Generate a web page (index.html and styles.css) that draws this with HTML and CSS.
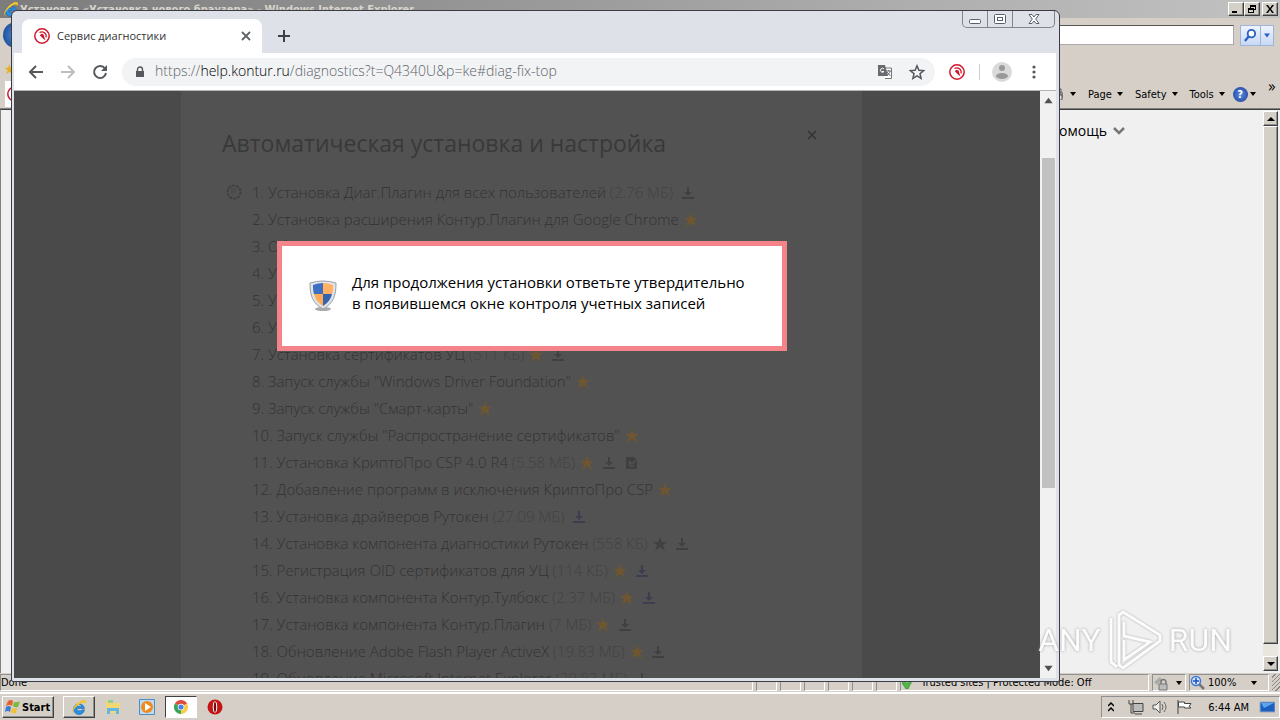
FILE: index.html
```html
<!DOCTYPE html>
<html lang="ru">
<head>
  <meta charset="UTF-8">
  <meta name="viewport" content="width=device-width, initial-scale=1.0">
  <title>Сервис диагностики</title>
  <link rel="stylesheet" href="styles.css">
</head>
<body>
  <svg class="sprite" aria-hidden="true">
    <symbol id="star" viewBox="0 0 14 14"><path d="M7 0l2 5h5l-4 3 2 6-5-4-5 4 2-6-4-3h5z" fill="currentColor"/></symbol>
    <symbol id="download" viewBox="0 0 14 14"><path d="M6 1h2v5h3l-4 4-4-4h3zM1 11h12v2H1z" fill="currentColor"/></symbol>
    <symbol id="reboot" viewBox="0 0 14 14"><path d="M2 1h8l3 3v9H2z" fill="currentColor"/><path d="M5 5l3 3 4-4M10 9.500a2.500 2.500 0 1 1-4-3" fill="none" stroke="#525252" stroke-width="1.300"/></symbol>
    <symbol id="caret" viewBox="0 0 8 8"><path d="M1 2h6L4 6z" fill="currentColor"/></symbol>
    <symbol id="kontur" viewBox="0 0 16 16"><circle cx="8" cy="8" r="7.200" fill="#fff" stroke="#d0162c" stroke-width="1.500"/><path d="M5.500 4.500A4.400 4.400 0 0 1 12 9.500" fill="none" stroke="#d0162c" stroke-width="1.200"/><path d="M6 7.500a2 2 0 0 1 4 .8L11.500 12.500 8.500 10z" fill="#d0162c"/></symbol>
    <symbol id="ie" viewBox="0 0 16 16"><path d="M13.500 9.500H5.500C6 12 10 12.500 11 10.800h2.500A5.500 5.500 0 1 1 13.500 9.500zM5.600 7.200h5C10 4.500 6.200 4.500 5.600 7.200z" fill="#2a8fe0" stroke="#1560b0" stroke-width=".5"/><path d="M2 14.500C-1 12 6 2 13 1c3 0 2 3 1 4 0-3-5-1-9 3-4 4-4 7-1 6z" fill="#f5c52c"/></symbol>
  </svg>

  <div class="desktop">
    <section class="ie">
      <div class="ie-title">
        <svg class="icon16"><use href="#ie"/></svg>
        <span class="ie-name">Установка «Установка нового браузера» - Windows Internet Explorer</span>
        <button class="classic cap" aria-label="Minimize"><svg viewBox="0 0 10 8"><path d="M1 6h5v2H1z"/></svg></button>
        <button class="classic cap" aria-label="Restore"><svg viewBox="0 0 10 8"><path d="M3 0h6v5H7v3H1V3h2zM4 2v1h3v1h1V2zM2 5v2h4V5z" fill-rule="evenodd"/></svg></button>
        <button class="classic cap close" aria-label="Close"><svg viewBox="0 0 10 8"><path d="M1 0h2l2 3 2-3h2L6 4l3 4H7L5 5 3 8H1l3-4z"/></svg></button>
      </div>
      <div class="ie-nav">
        <span class="ie-back"></span>
        <input class="ie-address" type="text" aria-label="Search">
        <button class="ie-search" aria-label="Go"><svg viewBox="0 0 14 14"><circle cx="8" cy="5" r="4" fill="#fff" stroke="#2b62c4" stroke-width="2"/><path d="M5 8l-4 5" stroke="#2b62c4" stroke-width="2.500"/></svg></button>
        <button class="ie-search drop" aria-label="Providers"><svg class="caret"><use href="#caret"/></svg></button>
      </div>
      <div class="ie-favs">★</div>
      <div class="ie-commands">
        <span class="ie-tab"><svg class="icon16"><use href="#kontur"/></svg></span>
        <button class="cmd"><svg class="printer" viewBox="0 0 12 12"><path d="M0 4h10v6H0z" fill="#888"/><path d="M2 1h6v3H2zM4 7h5v5H4z" fill="#ddd" stroke="#555"/></svg><svg class="caret"><use href="#caret"/></svg></button>
        <button class="cmd">Page<svg class="caret"><use href="#caret"/></svg></button>
        <button class="cmd">Safety<svg class="caret"><use href="#caret"/></svg></button>
        <button class="cmd">Tools<svg class="caret"><use href="#caret"/></svg></button>
        <button class="cmd help"><span class="help-ball">?</span><svg class="caret"><use href="#caret"/></svg></button>
        <span class="more">»</span>
      </div>
      <div class="ie-body">
        <div class="ie-page">
          <a class="help-link" href="#">Помощь<svg viewBox="0 0 12 8"><path d="M1 1l5 5 5-5" fill="none" stroke="#777" stroke-width="2.500"/></svg></a>
        </div>
        <div class="ie-scroll">
          <button class="classic arrow" aria-label="Up"><svg viewBox="0 0 8 4"><path d="M0 4h8L4 0z"/></svg></button>
          <div class="classic ie-thumb"></div>
          <button class="classic arrow" aria-label="Down"><svg viewBox="0 0 8 4"><path d="M0 0h8L4 4z"/></svg></button>
        </div>
      </div>
      <div class="ie-status">
        <span class="pane done">Done</span>
        <span class="pane"></span><span class="pane"></span><span class="pane"></span>
        <span class="pane"></span><span class="pane"></span><span class="pane"></span>
        <span class="pane zone"><svg viewBox="0 0 12 12"><path d="M1 6l3-2 2 3 4-6 2 1-5 10H5z" fill="#4cb848" stroke="#2f8f2c" stroke-width=".6"/></svg>Trusted sites | Protected Mode: Off</span>
        <span class="pane lock"><svg class="icon16" viewBox="0 0 16 16"><path d="M1 7l6-5 2 3-5 5z" fill="#aaa"/><path d="M8 9V7a2 2 0 0 1 5 0v2" fill="none" stroke="#777" stroke-width="1.500"/><path d="M6 9h8v6H6z" fill="#bbb" stroke="#777"/></svg><svg class="caret"><use href="#caret"/></svg></span>
        <span class="pane zoom"><svg class="icon16" viewBox="0 0 16 16"><circle cx="6" cy="6" r="4.500" fill="#d8eaff" stroke="#3a78d8" stroke-width="1.500"/><path d="M6 3v6M3 6h6" stroke="#1a4fc0" stroke-width="1.500"/><path d="M9 9l5 5" stroke="#777" stroke-width="2.500"/></svg>100%<svg class="caret"><use href="#caret"/></svg></span>
        <span class="grip"></span>
      </div>
    </section>

    <section class="chrome">
      <div class="tabs">
        <div class="tab">
          <svg class="icon16"><use href="#kontur"/></svg>
          <span>Сервис диагностики</span>
          <button class="plain" aria-label="Close tab"><svg viewBox="0 0 10 10"><path d="M1 1l8 8M9 1L1 9" stroke="#5f6368" stroke-width="1.800"/></svg></button>
        </div>
        <button class="plain new-tab" aria-label="New tab"><svg viewBox="0 0 12 12"><path d="M6 0v12M0 6h12" stroke="#3c4043" stroke-width="2"/></svg></button>
        <div class="win-buttons">
          <button aria-label="Minimize"><svg viewBox="0 0 12 10"><rect x=".5" y="5.500" width="11" height="4" rx="1" fill="#fff" stroke="#5a5f6e"/></svg></button>
          <button aria-label="Maximize"><svg viewBox="0 0 12 10"><rect x=".5" y=".5" width="11" height="9" rx="1" fill="#fff" stroke="#5a5f6e"/><rect x="3.500" y="3.500" width="5" height="3" fill="#fff" stroke="#5a5f6e"/></svg></button>
          <button class="wide" aria-label="Close"><svg viewBox="0 0 12 10"><path d="M1 .5h3l2 2.500 2-2.500h3L7.700 5l3.300 4.500H8L6 7 4 9.500H1L4.300 5z" fill="#fff" stroke="#5a5f6e"/></svg></button>
        </div>
      </div>
      <div class="toolbar">
        <button class="plain" aria-label="Back"><svg class="icon16" viewBox="0 0 16 16"><path d="M15 8H2M8 2L2 8l6 6" fill="none" stroke="#55585c" stroke-width="2"/></svg></button>
        <button class="plain" aria-label="Forward"><svg class="icon16" viewBox="0 0 16 16"><path d="M1 8h13M8 2l6 6-6 6" fill="none" stroke="#bcbec1" stroke-width="2"/></svg></button>
        <button class="plain" aria-label="Reload"><svg class="icon16" viewBox="0 0 16 16"><path d="M13 4.500A6 6 0 1 0 14 9" fill="none" stroke="#55585c" stroke-width="2"/><path d="M15 1v6H9z" fill="#55585c"/></svg></button>
        <div class="omnibox">
          <svg class="lock-icon" viewBox="0 0 10 12"><path d="M1 5h8v6H1z" fill="#55585c"/><path d="M2.500 5V3.500a2.500 2.500 0 0 1 5 0V5" fill="none" stroke="#55585c" stroke-width="1.400"/></svg>
          <a class="url" href="#">https://<b>help.kontur.ru</b>/diagnostics?t=Q4340U&amp;p=ke#diag-fix-top</a>
          <svg class="icon16" viewBox="0 0 16 16"><path d="M6 4h8.500v10.500H8" fill="#fff" stroke="#777"/><path d="M1 1h7l3 11H1z" fill="#666b70"/><path d="M7 5A2 2 0 1 0 7 7.500H5" fill="none" stroke="#fff"/><path d="M9 7h5M11.500 6v1M13 7c0 2-2 4-3 4M10 8l3.500 4" fill="none" stroke="#666b70"/></svg>
          <svg class="icon16" viewBox="0 0 16 16"><path d="M8 1.800l1.900 4.400 4.700.4-3.600 3.100 1.100 4.700L8 11.900l-4.100 2.500L5 9.700 1.400 6.600l4.700-.4z" fill="none" stroke="#55585c" stroke-width="1.500"/></svg>
        </div>
        <svg class="icon16"><use href="#kontur"/></svg>
        <span class="divider"></span>
        <svg class="avatar" viewBox="0 0 20 20"><circle cx="10" cy="10" r="10" fill="#dadada"/><circle cx="10" cy="6" r="3" fill="#999"/><ellipse cx="10" cy="14" rx="6" ry="3" fill="#999"/></svg>
        <button class="plain" aria-label="Menu"><svg class="icon16" viewBox="0 0 16 16" fill="#55585c"><circle cx="8" cy="3" r="1.600"/><circle cx="8" cy="8" r="1.600"/><circle cx="8" cy="13" r="1.600"/></svg></button>
      </div>
      <div class="view">
        <main class="page">
          <article class="setup">
            <header>
              <h1>Автоматическая установка и настройка</h1>
              <button class="plain" aria-label="Закрыть"><svg viewBox="0 0 10 10"><path d="M1 1l8 8M9 1L1 9" stroke="#333" stroke-width="1.600"/></svg></button>
            </header>
            <ol>
              <li class="current"><svg class="spinner" viewBox="0 0 16 16"><circle cx="8" cy="8" r="6.500" fill="none" stroke="#404040" stroke-width="2" stroke-dasharray="3 1"/><path d="M6 4v6M9 4v6" stroke="#404040"/></svg>1. Установка Диаг.Плагин для всех пользователей <small>(2.76 МБ)</small> <svg class="solo"><use href="#download"/></svg></li>
              <li>2. Установка расширения Контур.Плагин для Google Chrome <svg class="gold"><use href="#star"/></svg></li>
              <li>3. Обновление</li>
              <li>4. Установка</li>
              <li>5. Установка</li>
              <li>6. Установка</li>
              <li>7. Установка сертификатов УЦ <small>(511 КБ)</small> <svg class="gold"><use href="#star"/></svg> <svg><use href="#download"/></svg></li>
              <li>8. Запуск службы "Windows Driver Foundation" <svg class="gold"><use href="#star"/></svg></li>
              <li>9. Запуск службы "Смарт-карты" <svg class="gold"><use href="#star"/></svg></li>
              <li>10. Запуск службы "Распространение сертификатов" <svg class="gold"><use href="#star"/></svg></li>
              <li>11. Установка КриптоПро CSP 4.0 R4 <small>(5.58 МБ)</small> <svg class="gold"><use href="#star"/></svg> <svg><use href="#download"/></svg> <svg><use href="#reboot"/></svg></li>
              <li>12. Добавление программ в исключения КриптоПро CSP <svg class="gold"><use href="#star"/></svg></li>
              <li>13. Установка драйверов Рутокен <small>(27.09 МБ)</small> <svg class="blue solo"><use href="#download"/></svg></li>
              <li>14. Установка компонента диагностики Рутокен <small>(558 КБ)</small> <svg><use href="#star"/></svg> <svg><use href="#download"/></svg></li>
              <li>15. Регистрация OID сертификатов для УЦ <small>(114 КБ)</small> <svg class="gold"><use href="#star"/></svg> <svg class="blue"><use href="#download"/></svg></li>
              <li>16. Установка компонента Контур.Тулбокс <small>(2.37 МБ)</small> <svg class="gold"><use href="#star"/></svg> <svg class="blue"><use href="#download"/></svg></li>
              <li>17. Установка компонента Контур.Плагин <small>(7 МБ)</small> <svg class="gold"><use href="#star"/></svg> <svg><use href="#download"/></svg></li>
              <li>18. Обновление Adobe Flash Player ActiveX <small>(19.83 МБ)</small> <svg class="gold"><use href="#star"/></svg> <svg><use href="#download"/></svg></li>
              <li>19. Обновление Microsoft Internet Explorer <small>(29.82 МБ)</small> <svg class="solo"><use href="#download"/></svg></li>
            </ol>
          </article>
          <div class="notice" role="dialog">
            <svg class="shield" viewBox="0 0 28 32"><ellipse cx="14" cy="29" rx="8" ry="2" fill="#aaa"/><path d="M1 3q13-4 26 0c0 12-2 20-13 26C3 23 1 15 1 3z" fill="#dfe3e8" stroke="#9aa0a8"/><path d="M4 5q5-2 10-2v11H5C4 11 4 8 4 5z" fill="#3d6fc4"/><path d="M14 3q5 0 10 2c0 3 0 6-1 9h-9z" fill="#ffb060"/><path d="M5 14h9v12C9 23 6 19 5 14z" fill="#ffab55"/><path d="M14 14h9c-1 5-4 9-9 12z" fill="#3463b0"/></svg>
            <p>Для продолжения установки ответьте утвердительно<br>в появившемся окне контроля учетных записей</p>
          </div>
        </main>
        <div class="scroll">
          <svg class="caret up"><use href="#caret"/></svg>
          <div class="thumb"></div>
          <svg class="caret"><use href="#caret"/></svg>
        </div>
      </div>
    </section>

    <div class="watermark">
      <span>ANY</span>
      <svg viewBox="0 0 56 64"><path d="M16 4l37 23v6L16 60l-4-3V7zM4 10v44l6 5M17 14v14l26 6-26 18V32" fill="none" stroke="#fff" stroke-width="3"/></svg>
      <span>RUN</span>
    </div>

    <footer class="taskbar">
      <button class="classic start"><svg viewBox="0 0 16 16"><path d="M3 2q3-2 5 0L7 7Q5 5 1 7z" fill="#e8602c"/><path d="M9 3q3 1 6-1l-2 6q-3 1-5-1z" fill="#7cb83c"/><path d="M1 8q3-2 5 0l-1 5q-2-2-5 0z" fill="#3c7cd8"/><path d="M7 9q3 1 5 0l-1 5q-3 1-5-1z" fill="#f5c030"/></svg>Start</button>
      <button class="classic task" aria-label="Internet Explorer"><svg class="icon16"><use href="#ie"/></svg></button>
      <button class="plain" aria-label="Explorer"><svg class="icon16" viewBox="0 0 16 16"><path d="M1 2h6l1 2h7v10H1z" fill="#f3d774"/><path d="M3 1h5v3H3z" fill="#8fd08a"/><path d="M2 9h12v6h-3v-3H5v3H2z" fill="#63b7e8"/></svg></button>
      <button class="plain" aria-label="Media Player"><svg class="icon16" viewBox="0 0 16 16"><path d="M.5.500h15v15H.5z" fill="#bcdcf5" stroke="#4d8cc8"/><circle cx="8" cy="8" r="6" fill="#f08a1c"/><path d="M6 4l6 4-6 4z" fill="#fff"/></svg></button>
      <button class="classic task pressed" aria-label="Chrome"><svg class="icon16" viewBox="0 0 16 16"><path d="M8 8L1.900 4.500a7 7 0 0 1 12.200 0z" fill="#df4a3c"/><path d="M8 8h-.1L14.100 4.500A7 7 0 0 1 8 15z" fill="#f8ce46"/><path d="M8 8v7A7 7 0 0 1 1.900 4.500z" fill="#3aa45a"/><circle cx="8" cy="8" r="3.300" fill="#fff"/><circle cx="8" cy="8" r="2.600" fill="#4a83ea"/></svg></button>
      <button class="plain" aria-label="Opera"><svg class="icon16" viewBox="0 0 16 16"><circle cx="8" cy="8" r="7.500" fill="#c41414"/><ellipse cx="8" cy="8" rx="1.800" ry="5.500" fill="#7a0808" stroke="#fff"/></svg></button>
      <div class="tray">
        <svg class="chevrons" viewBox="0 0 6 10"><path d="M0 4l3-3 3 3M0 9l3-3 3 3" fill="none" stroke="#000" stroke-width="1.500"/></svg>
        <svg class="icon16" viewBox="0 0 16 16"><path d="M5 4.500h10v8H5z" fill="#bbb" stroke="#444"/><path d="M7 15h7M1 1v4h4V1M3 5v9h4" fill="none" stroke="#444"/></svg>
        <svg class="icon16" viewBox="0 0 16 16"><path d="M1 6h3l4-4v12l-4-4H1z" fill="#eee" stroke="#555"/><path d="M10 5q2 3 0 6M12 3q4 5 0 10" fill="none" stroke="#666"/></svg>
        <svg class="icon16" viewBox="0 0 16 16"><path d="M2 1v14M2.500 3h6v1.500H15l-2 3 2 1.500H8.500V8h-6z" fill="#fff" stroke="#444"/></svg>
        <time>6:44 AM</time>
        <svg class="icon16" viewBox="0 0 16 16"><path d="M1 3h15v10H1z" fill="#1d5fc0" stroke="#9ab"/><path d="M2 4h13L5 9z" fill="#5ca4ee"/></svg>
      </div>
    </footer>
  </div>
</body>
</html>
```
FILE: styles.css
```css
* {
  box-sizing: border-box;
}
body {
  margin: 0;
  font-family: "DejaVu Sans Condensed", "Liberation Sans", sans-serif;
  font-size: 11px;
  color: #000;
}
button {
  font: inherit;
  color: inherit;
  padding: 0;
  margin: 0;
  border: 0;
}
svg {
  flex: none;
}
.sprite {
  display: none;
}
.icon16 {
  width: 16px;
  height: 16px;
}
.caret {
  width: 8px;
  height: 8px;
}
.plain {
  display: flex;
  background: none;
}
.classic {
  background: #d4d0c8;
  border: 1px solid;
  border-color: #fff #404040 #404040 #fff;
  box-shadow: inset -1px -1px #909090;
}
.desktop {
  position: relative;
  display: flex;
  flex-direction: column;
  height: 100vh;
  overflow: hidden;
  background: #d5cfc8;
}

/* Internet Explorer */
.ie {
  flex: 1;
  display: flex;
  flex-direction: column;
  min-height: 0;
}
.ie-title {
  display: flex;
  align-items: center;
  height: 18px;
  padding: 0 2px 0 3px;
  background: linear-gradient(90deg, #7c7c7c, #c2c2c2);
  color: #d8d4cc;
  font-weight: bold;
}
.ie-name {
  flex: 1;
  margin-left: 1px;
}
.cap {
  width: 16px;
  height: 14px;
  display: flex;
  align-items: center;
  justify-content: center;
}
.cap svg {
  width: 10px;
  height: 8px;
}
.cap.close {
  margin-left: 2px;
}
.ie-nav {
  display: flex;
  align-items: center;
  height: 34px;
  padding: 0 6px 0 3px;
}
.ie-back {
  width: 26px;
  height: 26px;
  border-radius: 50%;
  background: radial-gradient(#4c8ce0, #123c80);
}
.ie-address {
  flex: 1;
  height: 20px;
  margin: 0 6px 0 8px;
  border: 1px solid #aaa;
  border-top-color: #555;
  background: #fff;
}
.ie-search {
  width: 21px;
  height: 21px;
  display: flex;
  align-items: center;
  justify-content: center;
  border: 1px solid #a0b4d8;
  background: linear-gradient(#eef4ff, #c8d8f4);
  color: #2b62c4;
}
.ie-search svg {
  width: 13px;
  height: 13px;
}
.ie-search.drop {
  width: 13px;
  border-left: 0;
}
.ie-search.drop svg {
  width: 8px;
}
.ie-favs {
  height: 28px;
  padding: 7px 4px;
  color: #e8b020;
  font-size: 14px;
  line-height: 20px;
}
.ie-commands {
  display: flex;
  align-items: center;
  justify-content: flex-end;
  gap: 11px;
  height: 29px;
  padding: 0 4px 0 5px;
  border-bottom: 1px solid #808080;
}
.ie-tab {
  margin-right: auto;
  height: 26px;
  padding: 5px 2px;
  background: #fff;
}
.cmd {
  display: flex;
  align-items: center;
  gap: 4px;
  background: none;
}
.printer {
  width: 12px;
  height: 12px;
}
.help-ball {
  width: 15px;
  height: 15px;
  border-radius: 50%;
  background: radial-gradient(#5c8ce4, #173a90);
  color: #fff;
  font-weight: bold;
  line-height: 15px;
}
.help {
  gap: 1px;
  margin-left: -4px;
}
.more {
  align-self: flex-start;
  font-size: 15px;
  line-height: 14px;
}
.ie-body {
  flex: 1;
  display: flex;
  min-height: 0;
  padding: 1px 2px 2px 1px;
  border-top: 1px solid #404040;
  border-left: 1px solid #808080;
  background: #f0f0f0;
}
.ie-page {
  flex: 1;
  display: flex;
  justify-content: flex-end;
  align-items: flex-start;
  padding: 11px 138px 0 0;
}
.help-link {
  display: flex;
  align-items: center;
  gap: 6px;
  font-family: "Open Sans", sans-serif;
  font-size: 14px;
  line-height: 18px;
  color: #000;
  text-decoration: none;
}
.help-link svg {
  width: 12px;
  height: 8px;
}
.ie-scroll {
  width: 15px;
  display: flex;
  flex-direction: column;
  background: #e9e6e0;
}
.arrow {
  height: 15px;
  display: flex;
  align-items: center;
  justify-content: center;
}
.arrow svg {
  width: 8px;
  height: 4px;
}
.ie-thumb {
  flex: 1;
  margin-bottom: 12px;
}
.ie-status {
  display: flex;
  height: 20px;
  padding: 1px 0;
  gap: 3px;
  border-bottom: 1px solid #fff;
}
.pane {
  display: flex;
  align-items: center;
  width: 21px;
  border: 1px solid;
  border-color: #909090 #fff #fff #909090;
}
.done {
  flex: 1;
}
.zone {
  width: 249px;
  gap: 8px;
}
.zone svg {
  width: 12px;
  height: 12px;
}
.lock {
  width: 34px;
  gap: 6px;
}
.zoom {
  width: 80px;
  gap: 2px;
}
.zoom .caret {
  margin-left: 12px;
}
.grip {
  width: 8px;
  background: repeating-linear-gradient(135deg, #d5cfc8 0 2px, #888 2px 3px);
}

/* Chrome */
.chrome {
  position: absolute;
  left: 11px;
  top: 10px;
  right: 220px;
  bottom: 38px;
  display: flex;
  flex-direction: column;
  padding: 0 3px 3px 2px;
  border: 1px solid #3c3c44;
  border-radius: 6px 6px 2px 2px;
  background: #dee1e8;
}
.tabs {
  display: flex;
  align-items: flex-end;
  height: 42px;
}
.tab {
  display: flex;
  align-items: center;
  width: 240px;
  height: 34px;
  margin-left: 8px;
  padding: 0 11px 0 12px;
  border-radius: 8px 8px 0 0;
  background: #fff;
  font-family: "Open Sans", sans-serif;
  font-size: 11px;
  color: #333;
}
.tab span {
  flex: 1;
  margin-left: 7px;
  padding-bottom: 2px;
}
.tab button svg {
  width: 10px;
  height: 10px;
}
.new-tab {
  margin: 0 0 11px 16px;
}
.new-tab svg {
  width: 12px;
  height: 12px;
}
.win-buttons {
  display: flex;
  align-self: flex-start;
  height: 17px;
  margin: 0 1px 0 auto;
  border: 1px solid #80848f;
  border-top: 0;
  border-radius: 0 0 5px 5px;
}
.win-buttons button {
  width: 25px;
  display: flex;
  align-items: center;
  justify-content: center;
  border-right: 1px solid #80848f;
  background: none;
}
.win-buttons .wide {
  width: 41px;
  border: 0;
}
.win-buttons svg {
  width: 12px;
  height: 10px;
}
.toolbar {
  display: flex;
  align-items: center;
  gap: 16px;
  height: 38px;
  padding: 0 14px;
  border-bottom: 1px solid #b4b4b4;
  background: #fff;
}
.omnibox {
  flex: 1;
  display: flex;
  align-items: center;
  gap: 16px;
  height: 28px;
  margin: 0 -2px;
  padding: 0 10px 0 13px;
  border-radius: 14px;
  background: #f1f3f5;
}
.lock-icon {
  width: 10px;
  height: 12px;
}
.url {
  flex: 1;
  margin-left: -6px;
  font-family: "Open Sans", sans-serif;
  font-size: 14px;
  font-weight: 300;
  line-height: 18px;
  padding-bottom: 2px;
  color: #5f6368;
  text-decoration: none;
}
.url b {
  font-weight: 300;
  color: #000;
}
.divider {
  width: 1px;
  height: 16px;
  margin: 0 -2px;
  background: #ccc;
}
.avatar {
  width: 20px;
  height: 20px;
  margin: 0 -2px;
}
.view {
  flex: 1;
  display: flex;
  min-height: 0;
}
.page {
  position: relative;
  flex: 1;
  padding-right: 11px;
  overflow: hidden;
  background: #4a4a4a;
  font-family: "Open Sans", sans-serif;
}
.setup {
  max-width: 681px;
  margin: 0 auto;
  padding: 36px 45px 0 41px;
  background: #525252;
  color: #323232;
}
.setup header {
  display: flex;
  justify-content: space-between;
}
.setup h1 {
  margin: 0;
  font-size: 23px;
  font-weight: 400;
  line-height: 32px;
  color: #393939;
}
.setup header svg {
  width: 10px;
  height: 10px;
  margin-top: 3px;
}
.setup header button {
  align-items: flex-start;
}
.setup ol {
  margin: 20px 0 0;
  padding: 0 0 0 30px;
  list-style: none;
  font-size: 15px;
  font-weight: 300;
  line-height: 27px;
  white-space: nowrap;
}
.setup small {
  font-size: 15px;
  color: #424242;
}
.setup li svg {
  width: 14px;
  height: 14px;
  margin: 0 3px 0 1px;
  vertical-align: -2px;
  color: #404040;
}
.setup li .gold {
  color: #6e5630;
}
.setup li .blue {
  color: #3c3e50;
}
.setup li .solo {
  margin-left: 4px;
}
.setup .current .spinner {
  width: 16px;
  height: 16px;
  margin: 0 10px 0 -26px;
}
.notice {
  position: absolute;
  top: 150px;
  left: 50%;
  display: flex;
  align-items: center;
  width: 510px;
  height: 110px;
  margin-left: -250px;
  padding: 0 27px;
  border: 5px solid #f4848a;
  background: #fff;
}
.shield {
  width: 28px;
  height: 32px;
}
.notice p {
  margin: 0 0 6px 15px;
  font-size: 15px;
  font-weight: 400;
  line-height: 21px;
  white-space: nowrap;
}
.scroll {
  width: 16px;
  display: flex;
  flex-direction: column;
  align-items: center;
  padding: 4px 0;
  background: #f1f1f1;
  color: #505050;
}
.scroll .caret {
  width: 11px;
  height: 11px;
}
.up {
  transform: rotate(180deg);
}
.thumb {
  width: 13px;
  height: 57%;
  margin: 52px 0 auto;
  background: #c1c1c1;
}

/* lies over both windows */
.watermark {
  position: absolute;
  right: 48px;
  bottom: 48px;
  display: flex;
  align-items: center;
  gap: 6px;
  font-family: "Roboto", sans-serif;
  font-size: 32px;
  color: #fff;
  text-shadow: 0 0 3px #888;
  opacity: 0.8;
}
.watermark svg {
  width: 56px;
  height: 64px;
  filter: drop-shadow(0 0 1px #999);
}

/* taskbar */
.taskbar {
  display: flex;
  align-items: center;
  height: 27px;
  padding: 0 0 0 2px;
  border-top: 1px solid #fff;
}
.start {
  display: flex;
  align-items: center;
  gap: 1px;
  width: 52px;
  height: 22px;
  padding: 0 2px;
  font-weight: bold;
}
.start svg {
  width: 16px;
  height: 16px;
}
.task {
  display: flex;
  align-items: center;
  justify-content: center;
  width: 32px;
  height: 22px;
  margin: 0 10px 0 9px;
}
.taskbar .plain {
  margin-right: 18px;
}
.pressed {
  margin: 0 10px 0 -8px;
  border-color: #404040 #fff #fff #404040;
  background: #fff;
  box-shadow: none;
}
.tray {
  display: flex;
  align-items: center;
  gap: 8px;
  height: 22px;
  margin-left: auto;
  padding: 0 4px 0 6px;
  border: 1px solid;
  border-color: #909090 #fff #fff #909090;
}
.chevrons {
  width: 6px;
  height: 10px;
  margin-right: 6px;
}
.tray time {
  margin: 0 2px 0 8px;
}
```
